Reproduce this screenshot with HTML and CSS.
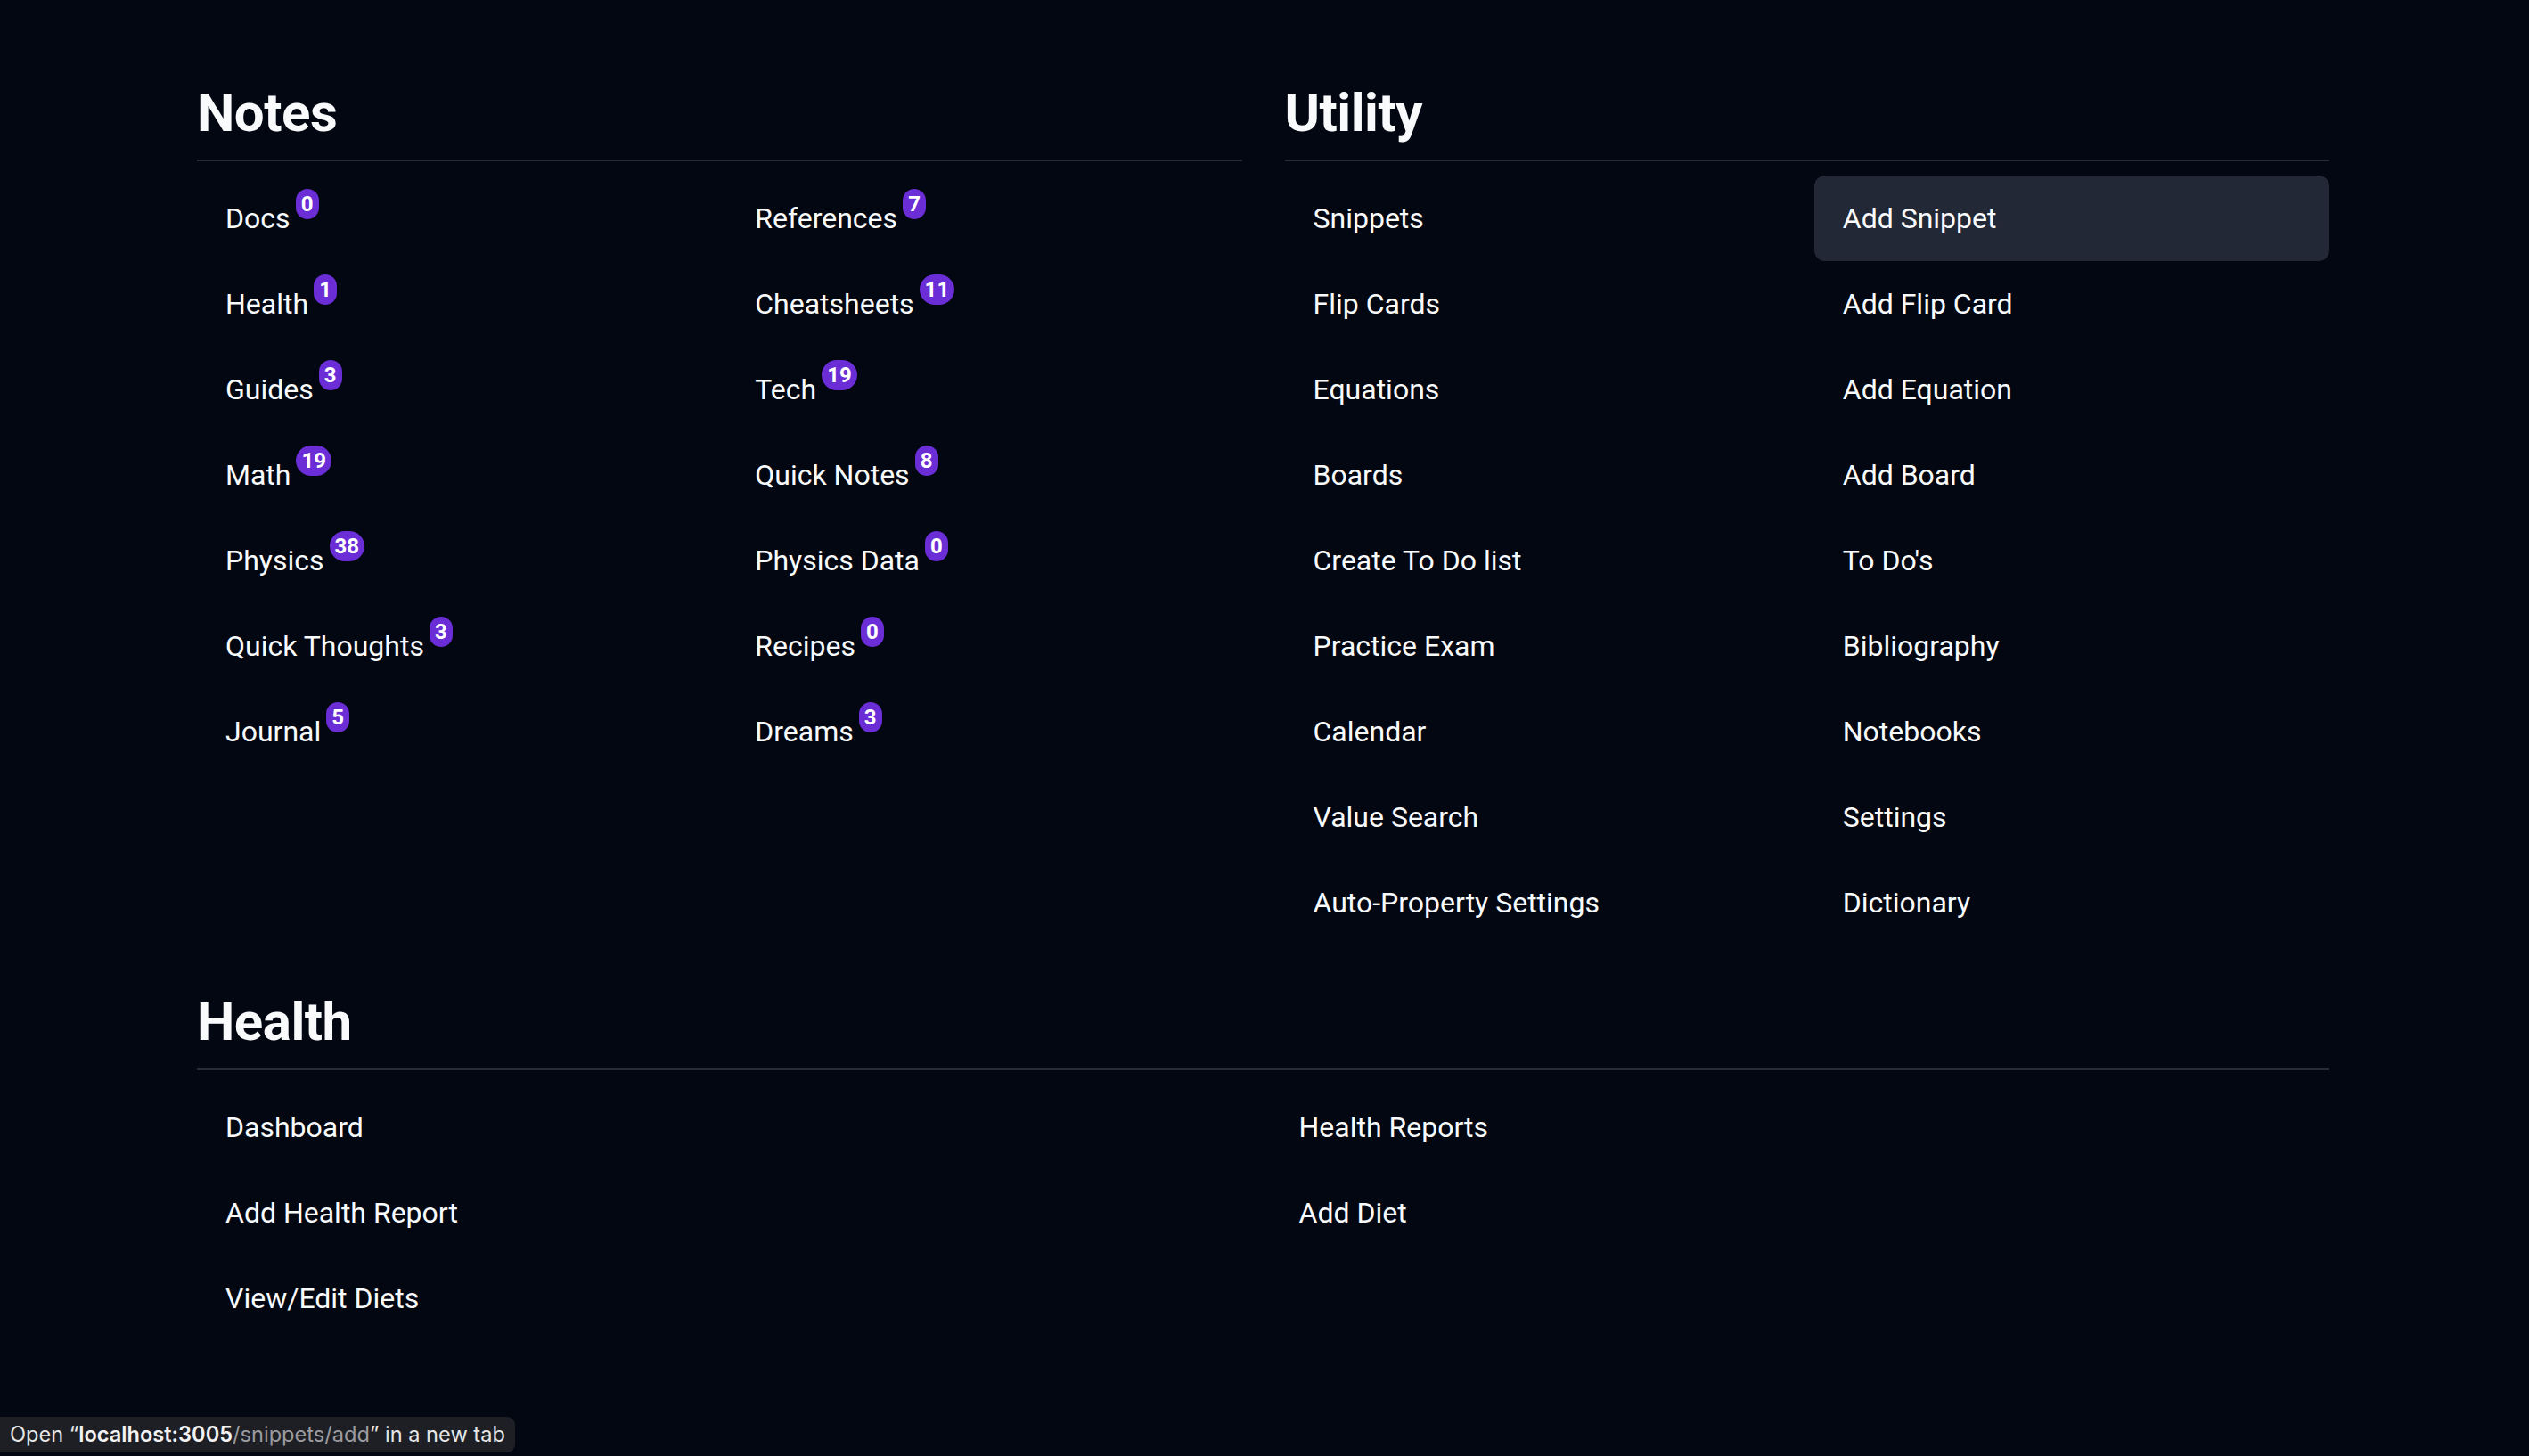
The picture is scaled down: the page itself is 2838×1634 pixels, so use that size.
FILE: index.html
```html
<!DOCTYPE html>
<html lang="en">
<head>
<meta charset="utf-8">
<title>Menu</title>
<link rel="stylesheet" href="styles.css">
</head>
<body>
<main class="page">
  <div class="top">
    <section class="section">
      <h2 class="section-title">Notes</h2>
      <div class="grid">
        <a class="item" href="#"><span>Docs</span><span class="badge">0</span></a>
        <a class="item" href="#"><span>References</span><span class="badge">7</span></a>
        <a class="item" href="#"><span>Health</span><span class="badge">1</span></a>
        <a class="item" href="#"><span>Cheatsheets</span><span class="badge">11</span></a>
        <a class="item" href="#"><span>Guides</span><span class="badge">3</span></a>
        <a class="item" href="#"><span>Tech</span><span class="badge">19</span></a>
        <a class="item" href="#"><span>Math</span><span class="badge">19</span></a>
        <a class="item" href="#"><span>Quick Notes</span><span class="badge">8</span></a>
        <a class="item" href="#"><span>Physics</span><span class="badge">38</span></a>
        <a class="item" href="#"><span>Physics Data</span><span class="badge">0</span></a>
        <a class="item" href="#"><span>Quick Thoughts</span><span class="badge">3</span></a>
        <a class="item" href="#"><span>Recipes</span><span class="badge">0</span></a>
        <a class="item" href="#"><span>Journal</span><span class="badge">5</span></a>
        <a class="item" href="#"><span>Dreams</span><span class="badge">3</span></a>
      </div>
    </section>
    <section class="section">
      <h2 class="section-title">Utility</h2>
      <div class="grid">
        <a class="item" href="#"><span>Snippets</span></a>
        <a class="item active" href="#"><span>Add Snippet</span></a>
        <a class="item" href="#"><span>Flip Cards</span></a>
        <a class="item" href="#"><span>Add Flip Card</span></a>
        <a class="item" href="#"><span>Equations</span></a>
        <a class="item" href="#"><span>Add Equation</span></a>
        <a class="item" href="#"><span>Boards</span></a>
        <a class="item" href="#"><span>Add Board</span></a>
        <a class="item" href="#"><span>Create To Do list</span></a>
        <a class="item" href="#"><span>To Do's</span></a>
        <a class="item" href="#"><span>Practice Exam</span></a>
        <a class="item" href="#"><span>Bibliography</span></a>
        <a class="item" href="#"><span>Calendar</span></a>
        <a class="item" href="#"><span>Notebooks</span></a>
        <a class="item" href="#"><span>Value Search</span></a>
        <a class="item" href="#"><span>Settings</span></a>
        <a class="item" href="#"><span>Auto-Property Settings</span></a>
        <a class="item" href="#"><span>Dictionary</span></a>
      </div>
    </section>
  </div>
  <section class="section health">
    <h2 class="section-title">Health</h2>
    <div class="grid">
      <a class="item" href="#"><span>Dashboard</span></a>
      <a class="item" href="#"><span>Health Reports</span></a>
      <a class="item" href="#"><span>Add Health Report</span></a>
      <a class="item" href="#"><span>Add Diet</span></a>
      <a class="item" href="#"><span>View/Edit Diets</span></a>
    </div>
  </section>
</main>
<div class="status">Open “<b class="host">localhost:3005</b><span class="path">/snippets/add</span>” in a new tab</div>
</body>
</html>
```

FILE: styles.css
```css
* { box-sizing: border-box; }

html, body {
  margin: 0;
  padding: 0;
  background: #030712;
  color: #f9fafb;
  font-family: Roboto, "Noto Sans", sans-serif;
}

body {
  min-height: 100vh;
}

.page {
  padding: 91px 224px 0 221px;
}

.top {
  display: grid;
  grid-template-columns: 1fr 1fr;
  column-gap: 48px;
}

.section-title {
  margin: 0;
  font-size: 60px;
  line-height: 72px;
  font-weight: 700;
  letter-spacing: -0.5px;
  padding-bottom: 16px;
  border-bottom: 2px solid #262c38;
  color: #f9fafb;
}

.grid {
  display: grid;
  grid-template-columns: 1fr 1fr;
  column-gap: 16px;
  margin-top: 16px;
}

.item {
  display: flex;
  align-items: flex-start;
  padding: 24px 32px;
  font-size: 32px;
  line-height: 48px;
  color: #f9fafb;
  text-decoration: none;
  border-radius: 12px;
}

.item.active {
  background: #222836;
}

.badge {
  margin-left: 6px;
  margin-top: -9px;
  min-width: 26px;
  height: 34px;
  padding: 0 6px;
  border-radius: 17px;
  background: #6a2dd6;
  color: #ffffff;
  font-size: 24px;
  line-height: 34px;
  font-weight: 700;
  text-align: center;
}

.health {
  margin-top: 50px;
}

.status {
  position: fixed;
  left: 0;
  bottom: 4px;
  height: 40px;
  padding: 0 11px 0 11px;
  background: #1d1f25;
  border-radius: 0 9px 9px 0;
  color: #e6e6e6;
  font-family: Inter, "Liberation Sans", sans-serif;
  font-size: 23.6px;
  line-height: 40px;
  white-space: nowrap;
}

.status .host {
  font-weight: 600;
  color: #f2f2f2;
}

.status .path {
  color: #9b9b9f;
}
```
